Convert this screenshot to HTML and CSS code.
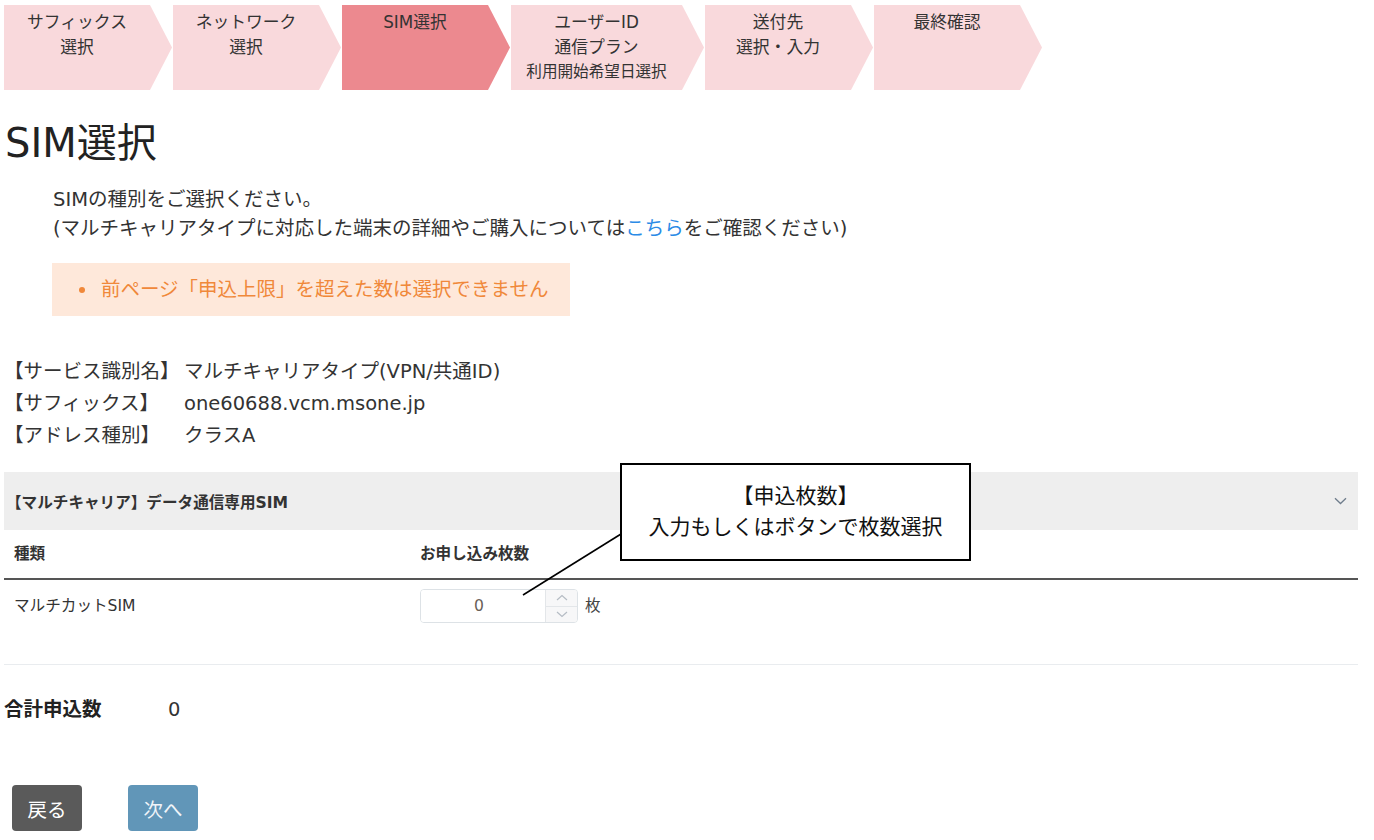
FILE: index.html
```html
<!DOCTYPE html>
<html lang="ja">
<head>
    <meta charset="UTF-8">
    <meta name="viewport" content="width=device-width, initial-scale=1.0">
    <title>SIM選択</title>
    <link rel="stylesheet" href="styles.css">
</head>
<body>
    <div class="page">
        <ol class="steps">
            <li class="step"><span>サフィックス<br>選択</span></li>
            <li class="step"><span>ネットワーク<br>選択</span></li>
            <li class="step current"><span>SIM選択</span></li>
            <li class="step wide"><span>ユーザーID<br>通信プラン<br><small>利用開始希望日選択</small></span></li>
            <li class="step"><span>送付先<br>選択・入力</span></li>
            <li class="step"><span>最終確認</span></li>
        </ol>

        <h1 class="page-title">SIM選択</h1>
        <p class="lead">
            SIMの種別をご選択ください。<br>
            (マルチキャリアタイプに対応した端末の詳細やご購入については<a href="#">こちら</a>をご確認ください)
        </p>

        <div class="alert">
            <ul>
                <li>前ページ「申込上限」を超えた数は選択できません</li>
            </ul>
        </div>

        <dl class="service-info">
            <dt>【サービス識別名】</dt>
            <dd>マルチキャリアタイプ(VPN/共通ID)</dd>
            <dt>【サフィックス】</dt>
            <dd>one60688.vcm.msone.jp</dd>
            <dt>【アドレス種別】</dt>
            <dd>クラスA</dd>
        </dl>

        <section class="sim-panel">
            <div class="panel-head">
                <span class="panel-title">【マルチキャリア】データ通信専用SIM</span>
                <svg class="chevron" width="13" height="8" viewBox="0 0 13 8">
                    <path d="M1 1.2 L6.5 6.5 L12 1.2" fill="none" stroke="#6f7d8c" stroke-width="1.3"/>
                </svg>
            </div>
            <table class="sim-table">
                <thead>
                    <tr>
                        <th class="col-kind">種類</th>
                        <th>お申し込み枚数</th>
                    </tr>
                </thead>
                <tbody>
                    <tr>
                        <td>マルチカットSIM</td>
                        <td>
                            <div class="qty">
                                <div class="spinner">
                                    <input class="spinner-input" type="text" value="0">
                                    <div class="spin-btns">
                                        <span class="spin-btn">
                                            <svg width="12" height="7" viewBox="0 0 12 7"><path d="M1 6 L6 1.5 L11 6" fill="none" stroke="#b5bcc4" stroke-width="1.2"/></svg>
                                        </span>
                                        <span class="spin-btn">
                                            <svg width="12" height="7" viewBox="0 0 12 7"><path d="M1 1 L6 5.5 L11 1" fill="none" stroke="#b5bcc4" stroke-width="1.2"/></svg>
                                        </span>
                                    </div>
                                </div>
                                <span class="unit">枚</span>
                            </div>
                        </td>
                    </tr>
                </tbody>
            </table>
        </section>

        <div class="total">
            <span class="total-label">合計申込数</span>
            <span class="total-value">0</span>
        </div>

        <div class="actions">
            <button class="btn btn-back">戻る</button>
            <button class="btn btn-next">次へ</button>
        </div>

        <!-- annotation overlay -->
        <div class="callout">【申込枚数】<br>入力もしくはボタンで枚数選択</div>
        <svg class="callout-line" width="110" height="70" viewBox="0 0 110 70">
            <line x1="5" y1="65" x2="103" y2="4" stroke="#000" stroke-width="1.6"/>
        </svg>
    </div>
</body>
</html>
```

FILE: styles.css
```css
:root {
    --text-color: #333;
    --step-color: #f9d9dc;
    --step-active: #ec898f;
    --alert-bg: #fee8da;
    --alert-text: #f0883a;
    --link-color: #2b8be6;
}
body {
    margin: 0;
    padding: 0;
    background: #fff;
    color: var(--text-color);
    font-family: "DejaVu Sans", "Noto Sans CJK JP", sans-serif;
    font-size: 19.5px;
}
.page {
    position: relative;
    width: 1354px;
    padding: 5px 0 0 4px;
}

/* progress steps */
.steps {
    display: flex;
    gap: 1px;
    margin: 0;
    padding: 0;
    list-style: none;
}
.step {
    width: 168px;
    height: 85px;
    box-sizing: border-box;
    padding: 5px 22px 0 0;
    background: var(--step-color);
    clip-path: polygon(0 0, calc(100% - 22px) 0, 100% 50%, calc(100% - 22px) 100%, 0 100%);
    text-align: center;
    font-size: 16.8px;
    line-height: 24.5px;
    color: #333;
}
.step.wide {
    width: 193px;
}
.step.current {
    background: var(--step-active);
}
.step small {
    font-size: 15.6px;
}

.page-title {
    margin: 29px 0 0 1px;
    font-size: 40px;
    font-weight: normal;
    line-height: 48px;
    color: #222;
}
.lead {
    margin: 18px 0 0 49px;
    line-height: 29px;
}
.lead a {
    color: var(--link-color);
    text-decoration: none;
}

.alert {
    width: 518px;
    margin: 20px 0 0 48px;
    padding: 12px 0 12px 27px;
    box-sizing: border-box;
    background: var(--alert-bg);
    color: var(--alert-text);
    line-height: 29px;
}
.alert ul {
    margin: 0;
    padding: 0;
    list-style: none;
}
.alert li {
    display: flex;
    align-items: center;
}
.alert li::before {
    content: "";
    width: 6px;
    height: 6px;
    border-radius: 50%;
    background: var(--alert-text);
    margin-right: 16px;
}

.service-info {
    display: grid;
    grid-template-columns: 180px 1fr;
    margin: 40px 0 0 0;
    line-height: 32px;
}
.service-info dt,
.service-info dd {
    margin: 0;
}

/* sim panel */
.sim-panel {
    margin-top: 20px;
}
.panel-head {
    display: flex;
    align-items: center;
    justify-content: space-between;
    height: 58px;
    padding: 0 11px 0 2px;
    background: #eeeeee;
}
.panel-title {
    font-size: 15.6px;
    font-weight: bold;
    color: #333;
}
.sim-table {
    width: 100%;
    border-collapse: collapse;
    font-size: 15.6px;
}
.sim-table th {
    text-align: left;
    padding: 12px 10px;
    line-height: 24px;
    border-bottom: 2px solid #555;
    font-weight: bold;
}
.sim-table .col-kind {
    width: 386px;
}
.sim-table td {
    padding: 9px 10px 41px;
    line-height: 34px;
    vertical-align: top;
    border-bottom: 1px solid #e9ecef;
}
.qty {
    display: flex;
    align-items: center;
    gap: 7px;
}
.spinner {
    display: flex;
    flex: none;
    width: 158px;
    height: 34px;
    box-sizing: border-box;
    border: 1px solid #dde2e6;
    border-radius: 4px;
    overflow: hidden;
}
.spinner-input {
    flex: none;
    width: 124px;
    box-sizing: border-box;
    border: none;
    padding: 0 8px 0 0;
    text-align: center;
    font: inherit;
    color: #6a5f58;
    outline: none;
}
.spin-btns {
    display: flex;
    flex-direction: column;
    flex: 1;
    border-left: 1px solid #e3e6e9;
    background: #f7f7f8;
}
.spin-btn {
    flex: 1;
    display: flex;
    align-items: center;
    justify-content: center;
}
.spin-btn + .spin-btn {
    border-top: 1px solid #e3e6e9;
}
.unit {
    color: #444;
}

.total {
    display: flex;
    margin-top: 30px;
    line-height: 29px;
}
.total-label {
    width: 164px;
    font-weight: bold;
    color: #222;
}

.actions {
    display: flex;
    gap: 46px;
    margin: 61px 0 0 8px;
}
.btn {
    width: 70px;
    height: 46px;
    border: none;
    border-radius: 4px;
    font-family: inherit;
    font-size: 19.5px;
    color: #fff;
    cursor: pointer;
}
.btn-back {
    background: #5a5a5a;
}
.btn-next {
    background: #6196b8;
    color: #f0f4f8;
}

/* annotation */
.callout {
    position: absolute;
    left: 620px;
    top: 463px;
    width: 351px;
    height: 98px;
    box-sizing: border-box;
    border: 2px solid #000;
    background: #fff;
    display: flex;
    align-items: center;
    justify-content: center;
    text-align: center;
    font-size: 21px;
    line-height: 31px;
    color: #111;
}
.callout-line {
    position: absolute;
    left: 518px;
    top: 530px;
}
```
